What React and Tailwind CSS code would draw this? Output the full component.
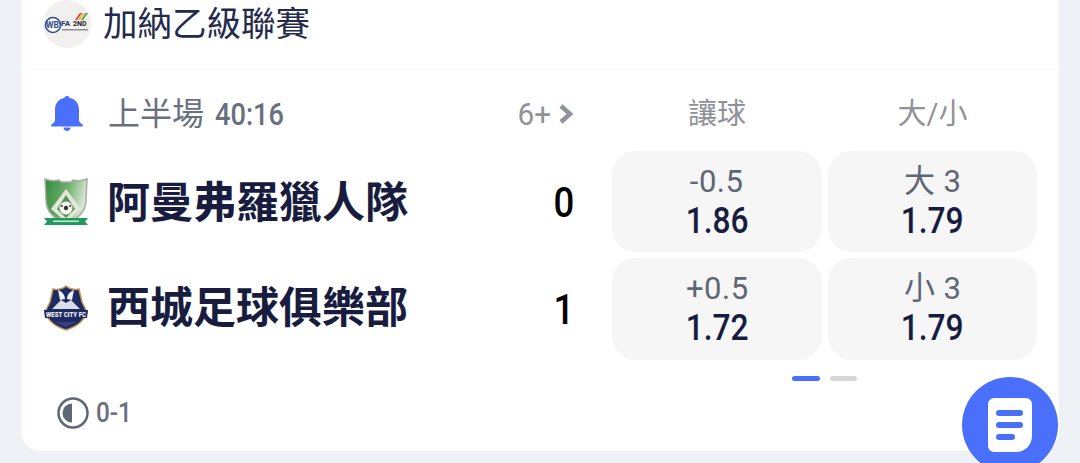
const cjk = '[font-family:Roboto,"Noto_Sans_CJK_TC",sans-serif]';

function LeagueLogo() {
  return (
    <div className="w-[48px] h-[48px] rounded-full bg-[#f1f0ee] flex items-center justify-center shrink-0">
      <svg width="46" height="24" viewBox="0 0 46 24">
        <circle cx="9" cy="13" r="7.5" fill="#fff" stroke="#2f4a8a" strokeWidth="1.6" />
        <text x="2" y="16" fontSize="8.5" fontWeight="700" fill="#2f4a8a" fontFamily="Roboto">WB</text>
        <text x="17" y="14" fontSize="8" fontWeight="700" fill="#24386c" fontFamily="Roboto">FA</text>
        <text x="29" y="14" fontSize="7" fontWeight="700" fill="#222" fontFamily="Roboto">2ND</text>
        <path d="M31 8l5-7h2l-5 7z" fill="#d33" />
        <path d="M34 8l5-7h2l-5 7z" fill="#e8b923" />
        <path d="M37 8l5-7h2l-5 7z" fill="#3a9a44" />
        <rect x="18" y="17" width="26" height="1.5" fill="#8b8f99" />
      </svg>
    </div>
  );
}

function GreenCrest() {
  return (
    <svg width="46" height="50" viewBox="0 0 46 50">
      <defs>
        <linearGradient id="g1" x1="0" y1="0" x2="1" y2="0.3">
          <stop offset="0" stopColor="#2f8c3c" />
          <stop offset="0.55" stopColor="#6fae6c" />
          <stop offset="1" stopColor="#dbe8d6" />
        </linearGradient>
      </defs>
      <path d="M2 1c5 2 10 2 14 1l2 2h10l2-2c4 1 9 1 14-1l-1 21c0 11-8 19-20 24C11 41 3 33 3 22z" fill="url(#g1)" stroke="#a9aca8" strokeWidth="1.5" />
      <path d="M23 11L8 31l15 13 15-13z" fill="#e4e6d8" />
      <path d="M23 17L14 31l9 9 9-9z" fill="#55935a" />
      <circle cx="23" cy="30" r="6.500" fill="#f4f4f0" />
      <circle cx="23" cy="30" r="2.200" fill="#333" />
      <circle cx="18.800" cy="28" r="1.100" fill="#333" />
      <circle cx="27.200" cy="28" r="1.100" fill="#333" />
      <path d="M1 40h44l-3 3.500 3 3.500H1l3-3.500z" fill="#1f9a5b" />
      <rect x="10" y="42.500" width="26" height="1.500" fill="#c8ead6" />
    </svg>
  );
}

function NavyCrest() {
  return (
    <svg width="46" height="48" viewBox="0 0 46 48">
      <path d="M23 2c3 3 9 4 13 3l3 13 5 10c-4 11-12 15-21 18C14 43 6 39 2 28l5-10 3-13c4 1 10 0 13-3z" fill="#1d2a63" stroke="#c89a55" strokeWidth="1.500" />
      <path d="M9 25l9-9 5 3 5-3 9 9z" fill="#d9dde8" />
      <path d="M15 6c3 1 7 4 7 9l-5 1zM31 6c-3 1-7 4-7 9l5 1z" fill="#eef0f6" />
      <path d="M1 26h44l-1 8H2z" fill="#1d2a63" />
      <text x="23" y="32.500" textAnchor="middle" fontSize="6.500" fontWeight="900" fill="#f1f1f1" fontFamily="Roboto" textLength="40" lengthAdjust="spacingAndGlyphs">WEST CITY FC</text>
      <path d="M12 38h22l-11 5z" fill="#34417e" />
    </svg>
  );
}

function OddsCell({ top, value, width }) {
  return (
    <div className={`${width} h-full rounded-[24px] bg-[#f6f6f7] flex flex-col items-center justify-center`}>
      <div className={`inline-block text-[32px] leading-[37px] text-[#5f6675] tracking-[0.5px] scale-x-[0.97] ${cjk}`}>{top}</div>
      <div className="inline-block text-[36.5px] leading-[41px] font-medium text-[#181d3f] scale-x-[0.87] [font-family:Roboto,sans-serif]">{value}</div>
    </div>
  );
}

function TeamRow({ crest, name, score, odds, className, nameClass }) {
  return (
    <div className={`flex items-center ${className}`}>
      <div className={`w-[46px] flex justify-center shrink-0 ${nameClass}`}>{crest}</div>
      <div className={`ml-[18px] text-[43px] leading-none font-bold text-[#181d3f] whitespace-nowrap ${nameClass} ${cjk}`}>{name}</div>
      <div className="ml-auto w-[40px] mr-[28px] text-center text-[42px] leading-none font-medium text-black scale-x-[0.87] mt-[2px] [font-family:Roboto,sans-serif]">{score}</div>
      <div className="flex gap-[6px] h-full">
        <OddsCell width="w-[210px]" top={odds[0].top} value={odds[0].value} />
        <OddsCell width="w-[209px]" top={odds[1].top} value={odds[1].value} />
      </div>
    </div>
  );
}

export default function App() {
  return (
    <div className="relative w-[1080px] h-[463px] overflow-hidden bg-[#eef1f5] px-[21px]">
      <div className="w-[1038px] h-[451px] bg-white rounded-b-[20px] flex flex-col">
        {/* League */}
        <div className="h-[69px] shrink-0 px-[22px] pb-[20px] flex items-center gap-[12px] border-b border-[#fafafa]">
          <LeagueLogo />
          <div className={`text-[34.5px] leading-none text-[#232a4d] whitespace-nowrap ${cjk}`}>加納乙級聯賽</div>
        </div>

        {/* Status */}
        <div className="flex items-center h-[36px] mt-[27px] pl-[30px] pr-[22px] shrink-0">
          <svg width="32" height="36" viewBox="0 0 32 36" className="shrink-0">
            <path d="M16 0c1.500 0 2.500 .8 2.800 2C25 3.200 28 8 28 14v10c0 1.800 1.200 2.800 3.300 4.300 .9 .7 .7 2.200-.6 2.200H1.300c-1.300 0-1.500-1.500-.6-2.200C2.800 26.800 4 25.800 4 24V14C4 8 7 3.200 13.200 2 13.500 .8 14.500 0 16 0z" fill="#4a6ffb" />
            <path d="M12.500 31.500h7c0 2-1.500 3.500-3.500 3.500s-3.500-1.500-3.500-3.500z" fill="#4a6ffb" />
          </svg>
          <div className={`ml-[25px] flex items-center text-[#687080] whitespace-nowrap ${cjk}`}>
            <span className="text-[32px] leading-none">上半場</span>
            <span className="inline-block ml-[11px] text-[32px] leading-none font-medium origin-left scale-x-[0.85]">40:16</span>
          </div>
          <div className={`ml-auto flex items-center text-[#8f9298] mr-[38px] ${cjk}`}>
            <span className="inline-block text-[32px] leading-none scale-x-[0.93] origin-right">6+</span>
            <svg width="16" height="22" viewBox="0 0 16 22" className="ml-[7px]">
              <path d="M3 3l9 8-9 8" fill="none" stroke="#8f9298" strokeWidth="4.500" />
            </svg>
          </div>
          <div className="flex gap-[6px]">
            <div className={`w-[210px] text-center text-[29px] leading-none text-[#8f9298] ${cjk}`}>讓球</div>
            <div className={`w-[209px] text-center text-[29px] leading-none text-[#8f9298] ${cjk}`}>大/小</div>
          </div>
        </div>

        {/* Teams */}
        <div className="mt-[19px] px-[22px] flex flex-col gap-[6px] shrink-0">
          <TeamRow
            className="h-[101px]"
            nameClass="mt-[3px]"
            crest={<GreenCrest />}
            name="阿曼弗羅獵人隊"
            score="0"
            odds={[{ top: '-0.5', value: '1.86' }, { top: '大 3', value: '1.79' }]}
          />
          <TeamRow
            className="h-[102px]"
            nameClass="-mt-[2px]"
            crest={<NavyCrest />}
            name="西城足球俱樂部"
            score="1"
            odds={[{ top: '+0.5', value: '1.72' }, { top: '小 3', value: '1.79' }]}
          />
        </div>

        {/* Pager dots */}
        <div className="mt-[16px] flex justify-end gap-[10px] pr-[202px] shrink-0">
          <div className="w-[28px] h-[5px] rounded-full bg-[#4a6ffb]" />
          <div className="w-[27px] h-[5px] rounded-full bg-[#d6d6d6]" />
        </div>

        {/* Half time score */}
        <div className="mt-[16px] pl-[36px] flex items-center gap-[7px] shrink-0">
          <svg width="32" height="32" viewBox="0 0 32 32">
            <circle cx="16" cy="16" r="14.500" fill="none" stroke="#5f6675" strokeWidth="2.500" />
            <path d="M15 6.500A9.500 9.500 0 0 0 15 25.500z" fill="#5f6675" />
          </svg>
          <span className="inline-block text-[27px] leading-none font-medium text-[#687080] origin-left scale-x-[0.9] [font-family:Roboto,sans-serif]">0-1</span>
        </div>
      </div>

      {/* Floating button */}
      <div className="absolute left-[962px] top-[377px] w-[96px] h-[96px] rounded-full bg-[#4a6ffb] flex items-start justify-center pt-[21px]">
        <svg width="44" height="54" viewBox="0 0 44 54">
          <path d="M6 0h32c3 0 6 3 6 6v32c0 9-7 16-16 16H6c-3 0-6-3-6-6V6c0-3 3-6 6-6z" fill="#fff" />
          <rect x="8" y="12" width="27" height="6" rx="3" fill="#4a6ffb" />
          <rect x="8" y="24" width="27" height="6" rx="3" fill="#4a6ffb" />
          <rect x="8" y="36" width="19" height="6" rx="3" fill="#4a6ffb" />
        </svg>
      </div>
    </div>
  );
}
